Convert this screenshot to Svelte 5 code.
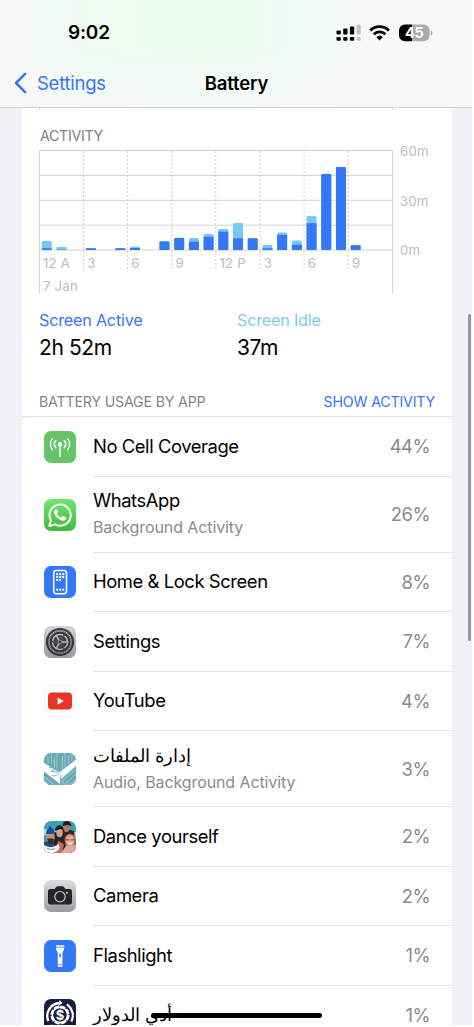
<script lang="ts">
  type App = {
    name: string;
    icon: string;
    percent: number;
    detail?: string;
    arabic?: boolean;
  };

  const apps: App[] = [
    { name: 'No Cell Coverage', icon: 'cell', percent: 44 },
    { name: 'WhatsApp', icon: 'whatsapp', percent: 26, detail: 'Background Activity' },
    { name: 'Home & Lock Screen', icon: 'home', percent: 8 },
    { name: 'Settings', icon: 'settings', percent: 7 },
    { name: 'YouTube', icon: 'youtube', percent: 4 },
    { name: 'إدارة الملفات', icon: 'files', percent: 3, detail: 'Audio, Background Activity', arabic: true },
    { name: 'Dance yourself', icon: 'dance', percent: 2 },
    { name: 'Camera', icon: 'camera', percent: 2 },
    { name: 'Flashlight', icon: 'flashlight', percent: 1 },
    { name: 'أدي الدولار', icon: 'dollar', percent: 1, arabic: true }
  ];

  // one entry per hour: [screen active, total], 100 = 60 minutes
  const hours = [
    [1.7, 9], [0.4, 3], [0, 0], [1.7, 1.7], [0, 0], [1.7, 1.7],
    [2, 3.3], [0, 0], [8.5, 9], [12, 12.3], [8.3, 12], [13.3, 16],
    [18.3, 21], [11.7, 27], [11.7, 12], [1.7, 5], [15.2, 17.5], [5.2, 9.5],
    [26.8, 34], [76, 76.3], [83, 83], [4.7, 5], [0, 0], [0, 0]
  ];
  const step = 353 / 24;
  const labels = ['12 A', '3', '6', '9', '12 P', '3', '6', '9'];
  const gearTeeth = Array.from({ length: 36 }, (_, i) => i * 10);
</script>

<div class="screen">
  <header>
    <div class="status">
      <span class="time">9:02</span>
      <svg class="indicators" width="98" height="20" viewBox="0 0 98 20">
        <g fill="#000">
          <rect x="0.5" y="7.5" width="4.3" height="4" rx="1" />
          <rect x="7.2" y="5.5" width="4.3" height="6" rx="1" />
          <rect x="13.9" y="3.5" width="4.3" height="8" rx="1" />
          <rect x="0.5" y="14" width="4.3" height="3.8" rx="1" />
          <rect x="7.2" y="14" width="4.3" height="3.8" rx="1" />
          <rect x="13.9" y="14" width="4.3" height="3.8" rx="1" />
        </g>
        <g fill="#bfc3c0">
          <rect x="20.6" y="1.8" width="4.1" height="9.7" rx="1" />
          <rect x="20.6" y="14" width="4.1" height="3.8" rx="1" />
        </g>
        <g fill="none" stroke="#000" stroke-width="2.8">
          <path d="M34.3 7.4a13.4 13.4 0 0 1 18.6 0" />
          <path d="M37.8 11.2a8.5 8.5 0 0 1 11.6 0" />
        </g>
        <path d="M43.6 17.4l-3.3-3.3a4.9 4.9 0 0 1 6.6 0z" fill="#000" />
        <path d="M69 1.4h7.3v16.8H69a6 6 0 0 1-6-6V7.4a6 6 0 0 1 6-6z" fill="#000" />
        <path d="M76.3 1.4h11.3a6 6 0 0 1 6 6v4.8a6 6 0 0 1-6 6H76.3z" fill="#ababab" />
        <path d="M94.9 7.2c2 .8 2 4.7 0 5.5z" fill="#ababab" />
        <text x="78.3" y="15" text-anchor="middle" class="charge">45</text>
      </svg>
    </div>
    <div class="nav">
      <a class="back" href="#settings">
        <svg width="14" height="22" viewBox="0 0 14 22">
          <path d="M11.2 1.8L2 11l9.2 9.2" fill="none" stroke="#3478f6" stroke-width="2.5" stroke-linecap="round" stroke-linejoin="round" />
        </svg>
        <span>Settings</span>
      </a>
      <h1>Battery</h1>
    </div>
  </header>

  <main>
    <div class="ticks"></div>
    <h2>ACTIVITY</h2>

    <svg class="chart" width="413" height="149" viewBox="0 0 413 149">
      <g stroke="#d4d4d6" stroke-width="1">
        {#each [0, 1, 2, 3, 4] as i}
          <line x1="0" x2="354" y1={5.5 + i * 24.9} y2={5.5 + i * 24.9} />
        {/each}
        <line x1="0.5" x2="0.5" y1="5" y2="149" />
        <line x1="353.5" x2="353.5" y1="5" y2="149" />
        {#each [1, 2, 3, 4, 5, 6, 7] as i}
          <line x1={i * step * 3 + 0.3} x2={i * step * 3 + 0.3} y1="6" y2="126" stroke-dasharray="2 2" stroke="#ccccce" />
        {/each}
      </g>
      {#each hours as [active, total], i}
        {#if total > 0}
          <rect x={i * step + 2.8} y={105 - total} width="10" height={total} rx={Math.min(1.5, total / 3)} fill="#75c8f8" />
          <rect x={i * step + 2.8} y={105 - active} width="10" height={active} rx={total - active < 1 ? Math.min(1.2, active / 3) : 0} fill="#3478f6" />
        {/if}
      {/each}
      {#each labels as label, i}
        <text x={i * step * 3 + 4} y="123.3">{label}</text>
      {/each}
      <text x="4" y="146">7 Jan</text>
      <text x="361" y="11">60m</text>
      <text x="361" y="60.5">30m</text>
      <text x="361" y="110">0m</text>
    </svg>

    <div class="totals">
      <div>
        <div class="label active">Screen Active</div>
        <div class="value">2h 52m</div>
      </div>
      <div>
        <div class="label idle">Screen Idle</div>
        <div class="value">37m</div>
      </div>
    </div>

    <div class="usage-head">
      <span class="title">BATTERY USAGE BY APP</span>
      <span class="toggle">SHOW ACTIVITY</span>
    </div>

    <ul>
      {#each apps as app}
        <li class:tall={app.detail}>
          <svg class="icon" width="32" height="32" viewBox="0 0 32 32">
            {#if app.icon === 'cell'}
              <rect width="32" height="32" fill="#65c466" />
              <g fill="none" stroke="#fff" stroke-width="1.5" stroke-linecap="round">
                <path d="M11.8 9.600a5.500 5.500 0 0 0 0 7.200M20.200 9.600a5.500 5.500 0 0 1 0 7.200M8.300 7.900a9 9 0 0 0 0 10.600M23.700 7.900a9 9 0 0 1 0 10.600" />
                <path d="M16 14v11.6" />
              </g>
              <circle cx="16" cy="13.2" r="2.2" fill="#fff" />
            {:else if app.icon === 'whatsapp'}
              <defs>
                <linearGradient id="wa" x2="0" y2="1">
                  <stop stop-color="#73e56c" />
                  <stop offset="1" stop-color="#43b83f" />
                </linearGradient>
              </defs>
              <rect width="32" height="32" fill="url(#wa)" />
              <path d="M5.3 27l1.6-5.7a10.6 10.6 0 1 1 4.1 4.1z" fill="none" stroke="#fff" stroke-width="2" stroke-linejoin="round" />
              <path d="M12.2 10.3c-.7-.3-2.2.9-2.1 2.8.2 3.8 5.3 8.6 9 8.6 1.8 0 3.2-1.3 3.1-2.8 0-.6-2.8-2-3.4-1.8-.5.2-1.1 1.5-1.7 1.4-1.3-.3-3.8-2.5-4.1-3.8-.1-.5 1-1.1 1-1.7 0-.5-1.2-2.5-1.8-2.7z" fill="#fff" />
            {:else if app.icon === 'home'}
              <rect width="32" height="32" fill="#3478f6" />
              <rect x="9.7" y="4.4" width="12.8" height="23.4" rx="2.7" fill="none" stroke="#fff" stroke-width="1.5" />
              <g fill="#fff">
                {#each [0, 1, 2] as c}
                  <rect x={12.2 + c * 3} y="7.2" width="2" height="2" />
                  <rect x={12.2 + c * 3} y="10.1" width="2" height="2" />
                  {#if c < 2}<rect x={12.2 + c * 3} y="13" width="2" height="2" />{/if}
                  <rect x={12.2 + c * 3} y="22.7" width="2" height="2" />
                {/each}
              </g>
            {:else if app.icon === 'settings'}
              <defs>
                <linearGradient id="gear" x2="0" y2="1">
                  <stop stop-color="#d5d5d7" />
                  <stop offset="1" stop-color="#9a9a9e" />
                </linearGradient>
              </defs>
              <rect width="32" height="32" fill="url(#gear)" />
              <g transform="translate(16 16)" fill="none" stroke="#38383b">
                <circle r="13" stroke-width="2.2" />
                {#each gearTeeth as a}
                  <path d="M0-10.6v-1.6" transform="rotate({a})" stroke-width="0.8" />
                {/each}
                <circle r="9.400" stroke-width="2.200" />
                <circle r="5.600" stroke-width="2.400" />
                <circle r="4.500" fill="#48484c" stroke="none" />
                <g stroke="#b9b9bc" stroke-width="1.500">
                  <path d="M2 0h6.300M-1-1.700l-3.200-5.500M-1 1.700l-3.200 5.500" />
                </g>
                <g stroke="#38383b" stroke-width="1.500">
                  <path d="M-7-0.500h-1.500M3.500-6l1-1.700M3.500 6l1 1.700" />
                </g>
                <circle r="1.700" fill="#38383b" stroke="#b9b9bc" stroke-width="0.600" />
              </g>
            {:else if app.icon === 'youtube'}
              <rect x="0.4" y="0.4" width="31.2" height="31.2" rx="7" fill="#fff" stroke="#ececef" stroke-width="0.8" />
              <rect x="4" y="7.6" width="24" height="17" rx="3.8" fill="#eb3323" />
              <path d="M13.6 12.6l6.2 3.5-6.2 3.6z" fill="#fff" />
            {:else if app.icon === 'files'}
              <rect width="32" height="32" fill="#68a9b5" />
              <g stroke="#a3cfd6" stroke-width="0.9">
                <path d="M4 3v8M7.500 0v11M10.500 4v12M13 0v16M18.500 3v15M21 0v14M24.500 2v9M28 0v8" />
              </g>
              <path d="M32 6.500v6.500L17 26l-1-7z" fill="#fff" />
              <path d="M0 10l16 9.500V31L0 18.500z" fill="#fff" />
              <path d="M5 14.500l7 1-5 3 7 .5M8 22.500c4 1 7-1 6-3" fill="none" stroke="#68a9b5" stroke-width="0.9" />
              <path d="M0 19.500L14.500 31v1H0z" fill="#68a9b5" />
              <path d="M17 27l15-12.500V32H17z" fill="#80b7c2" />
              <path d="M0 23.500l10 8M0 27.500l5 4" stroke="#a3cfd6" stroke-width="1" />
              <path d="M20 29l12-10.500M25 30l7-6.500" stroke="#5c9eab" stroke-width="1.400" />
            {:else if app.icon === 'dance'}
              <rect width="32" height="32" fill="#3aa0b2" />
              <path d="M0 8l32 3v6L0 14z" fill="#a7d9dc" />
              <path d="M10 12l9-5 11 3 2 22H8z" fill="#24242a" />
              <path d="M0 21l8-1 8 12H0z" fill="#234a72" />
              <ellipse cx="6.500" cy="16" rx="4.200" ry="5.500" fill="#c99275" />
              <path d="M2 13c0-8 9-8 9 0z" fill="#16549a" />
              <circle cx="6" cy="6.800" r="1.300" fill="#174b8b" />
              <path d="M3 18c2-1 5-1 7 0l-2 5H5z" fill="#3b2929" />
              <ellipse cx="15.500" cy="11.500" rx="3.200" ry="4.700" fill="#d5a287" />
              <path d="M11 10c0-7 8-8 9-1l-4-1z" fill="#171b23" />
              <ellipse cx="22.500" cy="6.500" rx="3.100" ry="4.500" fill="#b97b62" />
              <path d="M18.500 5c0-6 8-7 9 0l-4-1z" fill="#241c20" />
              <path d="M14 20l6 3-2 9h-7z" fill="#c56c5f" />
              <path d="M20.500 19c0-8.500 11-8.500 11 0l-1 6h-9z" fill="#b8694a" />
              <ellipse cx="26" cy="19.500" rx="4.200" ry="5.500" fill="#e5ad91" />
              <path d="M22 18h3.500v1.600H22zM27 18h3.500v1.600H27z" fill="#a4584a" />
              <path d="M24 22q2 2 4 0" stroke="#fff" stroke-width="1" fill="none" />
              <path d="M17 32l5-7 10-1v8z" fill="#e6a899" />
              <path d="M0 24c5 3 10 3 14-1 4 4-1 9-7 9H0z" fill="#fff" />
              <path d="M3 27c3 2 6 2 8 0" fill="none" stroke="#438c9b" />
            {:else if app.icon === 'camera'}
              <defs>
                <linearGradient id="cam" x2="0" y2="1">
                  <stop stop-color="#dcdcde" />
                  <stop offset="1" stop-color="#9b9b9f" />
                </linearGradient>
              </defs>
              <rect width="32" height="32" fill="url(#cam)" />
              <path d="M6.500 9h4l1.800-2.100q.5-.6 1.300-.6h5q.8 0 1.300.6L21.700 9h3.800q2.500 0 2.500 2.500V22q0 2.500-2.500 2.500h-19Q4 24.500 4 22V11.500Q4 9 6.500 9z" fill="#252529" />
              <circle cx="16" cy="16.700" r="5.200" fill="none" stroke="#c5c5c8" stroke-width="1.200" />
              <circle cx="23" cy="12.700" r="1" fill="#f4ce46" />
            {:else if app.icon === 'flashlight'}
              <rect width="32" height="32" fill="#3478f6" />
              <path d="M11.900 5.200h8.400v1.500h-8.400zM11.900 7.500h8.400q0 3-1.900 5v14.200h-4.600V12.500q-1.900-2-1.900-5z" fill="#fff" />
              <rect x="15.300" y="13.400" width="1.600" height="4" rx="0.800" fill="#3478f6" />
              <path d="M13.500 24.500h5.200" stroke="#3478f6" stroke-width="0.600" />
            {:else}
              <rect width="32" height="32" fill="#181b43" />
              <g fill="none" stroke="#fff">
                <path d="M4.300 22A13 13 0 0 1 16 4" stroke-width="2.400" />
                <path d="M22.800 5.400a13 13 0 0 1 4.500 17" stroke-width="2.200" />
                <path d="M7 26a13 13 0 0 0 16 1" stroke-width="2" />
              </g>
              <path d="M15.500 1l3 3.200-4 2.600z" fill="#fff" />
              <circle cx="16" cy="16" r="8.200" fill="none" stroke="#fff" stroke-width="2.800" stroke-dasharray="5.200 1.240" />
              <circle cx="16" cy="16" r="7.700" fill="none" stroke="#fff" stroke-width="1.600" />
              <text x="16" y="20.700" text-anchor="middle" class="coin">$</text>
            {/if}
          </svg>
          <div class="body">
            <div class="names">
              <div class="name" class:arabic={app.arabic}>{app.name}</div>
              {#if app.detail}
                <div class="detail">{app.detail}</div>
              {/if}
            </div>
            <span class="percent">{app.percent}%</span>
          </div>
        </li>
      {/each}
    </ul>
  </main>

  <div class="scrollbar"></div>
  <div class="home-bar"></div>
</div>

<style>
  :global(body) {
    background: #fff;
  }

  .screen {
    position: relative;
    width: 472px;
    height: 1025px;
    overflow: hidden;
    background: #f0f0f5;
    font-family: Inter, 'Noto Sans', sans-serif;
    color: #000;
  }

  header {
    box-sizing: border-box;
    height: 108px;
    border-bottom: 1px solid #d3d3d6;
    background:
      linear-gradient(180deg, rgba(248, 248, 249, 0) 45%, rgba(248, 248, 249, 0.75) 100%),
      linear-gradient(90deg, #f8f9f9 0%, #effcf2 18%, #ecfdf1 50%, #f4faf5 72%, #f8f8f9 88%);
  }

  .status {
    display: flex;
    justify-content: space-between;
    align-items: center;
    height: 65px;
    padding: 0 38px 0 68px;
  }

  .time {
    font-size: 19px;
    font-weight: 600;
    letter-spacing: -0.2px;
  }

  .charge {
    font-size: 14.5px;
    font-weight: 700;
    fill: #fff;
    letter-spacing: -0.3px;
  }

  .nav {
    display: grid;
    grid-template-columns: 1fr auto 1fr;
    align-items: center;
    height: 36px;
    padding: 0 13px 0 14px;
  }

  .back {
    display: flex;
    align-items: center;
    gap: 9px;
    color: #3478f6;
    font-size: 18.5px;
    letter-spacing: -0.25px;
    text-decoration: none;
  }

  h1 {
    margin: 0;
    font-size: 18.5px;
    font-weight: 600;
    letter-spacing: -0.15px;
  }

  main {
    width: 430px;
    height: 917px;
    margin-left: 22px;
    background: #fff;
  }

  .ticks {
    width: 352px;
    height: 2px;
    margin-left: 17px;
    border: solid #d4d4d6;
    border-width: 0 1px;
  }

  h2 {
    margin: 17px 0 0 18px;
    font-size: 14.2px;
    line-height: 18px;
    font-weight: 400;
    letter-spacing: -0.3px;
    color: #808084;
  }

  .chart {
    display: block;
    margin-left: 17px;
  }

  .chart text {
    font-size: 13.2px;
    fill: #bcbcbf;
    letter-spacing: 0.2px;
  }

  .totals {
    display: grid;
    grid-template-columns: 198px 1fr;
    margin: 14px 0 0 17px;
  }

  .label {
    font-size: 16.2px;
    line-height: 24px;
    letter-spacing: -0.22px;
  }

  .label.active {
    color: #3478f6;
  }

  .label.idle {
    color: #84caf0;
  }

  .value {
    font-size: 21px;
    line-height: 32px;
    letter-spacing: -0.4px;
  }

  .usage-head {
    display: flex;
    justify-content: space-between;
    align-items: center;
    height: 30px;
    margin-top: 22px;
    padding: 0 17px;
    border-bottom: 1px solid #e2e2e5;
    font-size: 14.2px;
    letter-spacing: -0.18px;
  }

  .title {
    color: #858589;
  }

  .toggle {
    color: #3478f6;
  }

  ul {
    margin: 0;
    padding: 0;
    list-style: none;
  }

  li {
    display: flex;
    align-items: center;
    height: 59.5px;
    padding-left: 22px;
  }

  li.tall {
    height: 76px;
  }

  .icon {
    flex: none;
    border-radius: 7px;
  }

  .body {
    box-sizing: border-box;
    display: flex;
    flex: 1;
    justify-content: space-between;
    align-items: center;
    height: 100%;
    margin-left: 17px;
    padding-right: 22px;
    border-bottom: 1px solid #e4e4e7;
  }

  .name {
    font-size: 18.4px;
    line-height: 27px;
    letter-spacing: -0.42px;
  }

  .name.arabic {
    font-size: 18.1px;
    letter-spacing: 0;
  }

  .detail {
    font-size: 16px;
    line-height: 27px;
    letter-spacing: -0.1px;
    color: #8b8b8f;
  }

  .percent {
    font-size: 18.4px;
    color: #8b8b8f;
    letter-spacing: -0.5px;
  }

  .coin {
    font-size: 13px;
    font-weight: 700;
    fill: #fff;
  }

  .scrollbar {
    position: absolute;
    top: 314px;
    right: 1px;
    width: 3px;
    height: 327px;
    border-radius: 2px;
    background: #97979b;
  }

  .home-bar {
    position: absolute;
    left: 151px;
    bottom: 7px;
    width: 171px;
    height: 5px;
    border-radius: 3px;
    background: #000;
  }
</style>
